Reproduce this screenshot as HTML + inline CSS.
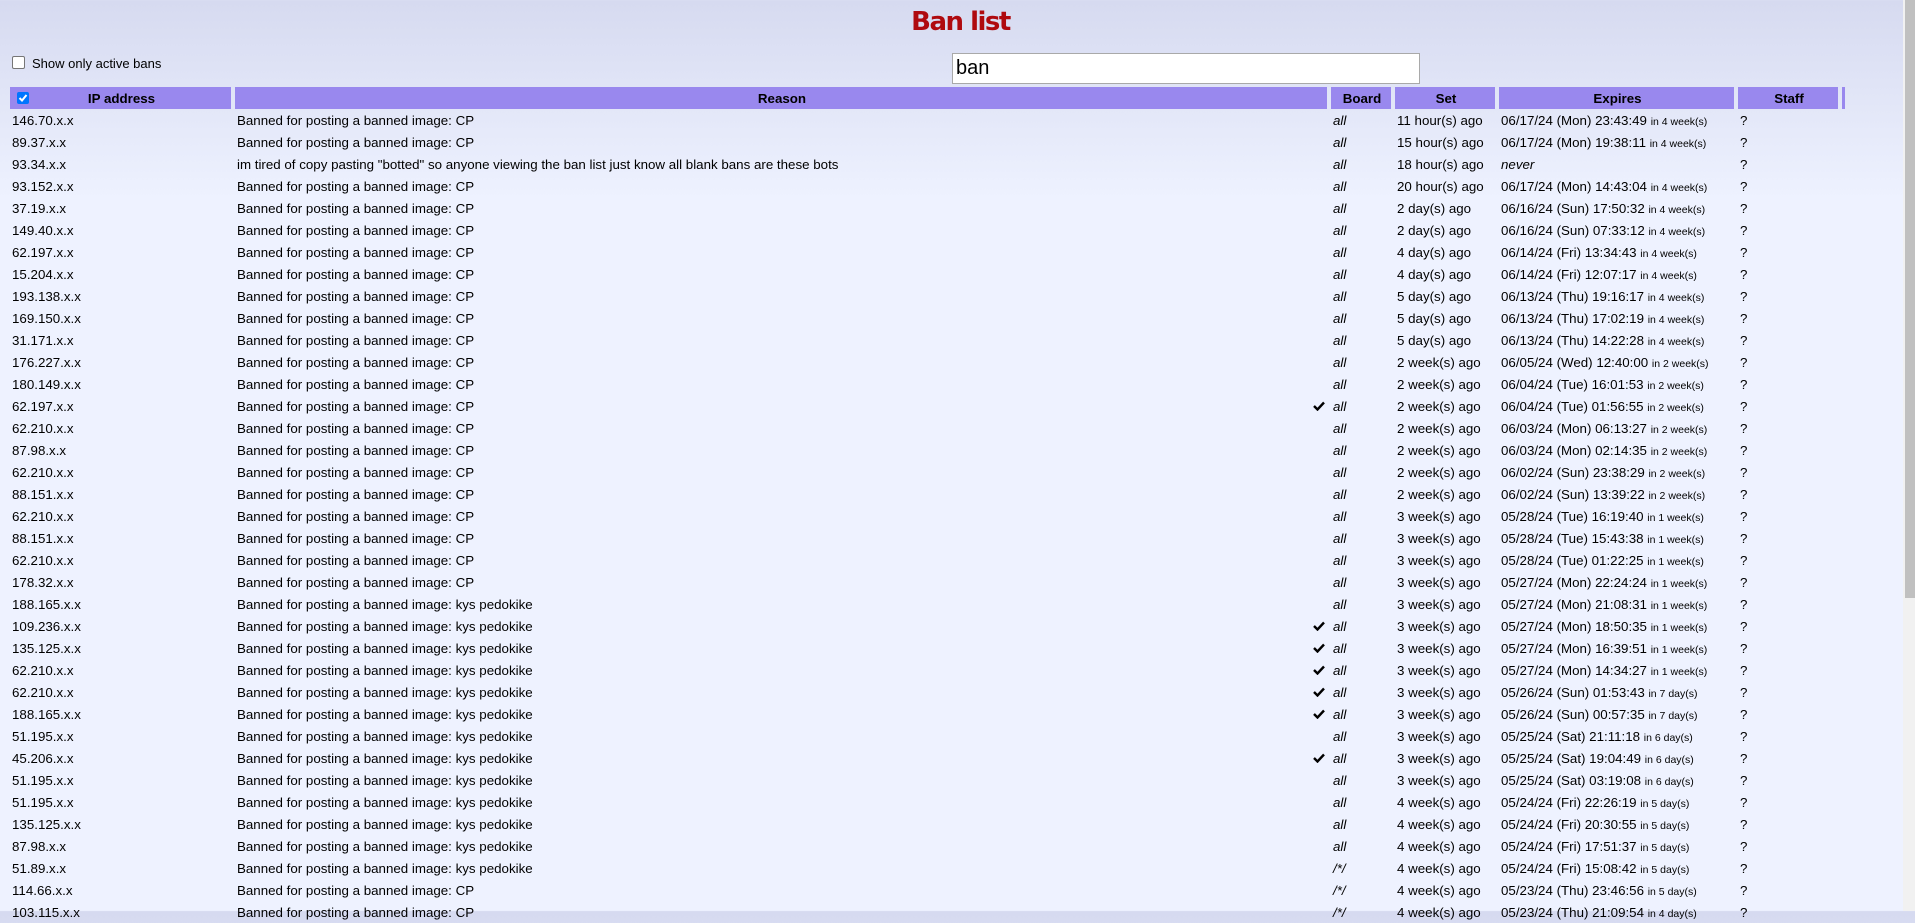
<!DOCTYPE html>
<html><head><meta charset="utf-8"><style>
html,body{margin:0;padding:0;}
body{width:1915px;height:911px;overflow:hidden;position:relative;font-family:"Liberation Sans",Arial,sans-serif;font-size:13.33px;color:#000;
background:linear-gradient(#d6daf0 0px,#eef2ff 200px,#eef2ff 911px);}
h1{position:absolute;left:0;width:1921px;top:7px;margin:0;text-align:center;font-family:"DejaVu Sans","Liberation Sans",sans-serif;font-weight:bold;font-size:26px;color:#af0a0f;letter-spacing:-1.5px;}
.chk{position:absolute;left:12px;top:56px;width:11px;height:11px;border:1px solid #767676;border-radius:2px;background:#fff;}
.lbl{position:absolute;left:32px;top:56px;font-size:13px;}
.inp{position:absolute;left:952px;top:53px;width:468px;height:31px;background:#fff;border:1px solid #a9a9a9;font-size:20px;line-height:29px;padding-left:3px;box-sizing:border-box;}
table{position:absolute;left:6px;top:87px;border-collapse:separate;border-spacing:4px 0;table-layout:fixed;}
td,th{padding:0 0 0 2px;height:22px;white-space:nowrap;overflow:hidden;}
th{background:#9988ee;font-weight:bold;font-size:13.33px;text-align:center;position:relative;}
th .cb{position:absolute;left:7px;top:5px;width:12px;height:12px;background:#0075ff;border-radius:2px;}
td.b{font-style:italic;}
td.r{position:relative;}
td.r svg{position:absolute;right:2px;top:6px;}
small{font-size:10.5px;}
.sb{position:absolute;right:0;top:0;width:12px;height:911px;background:#f1f1f1;}
.th{position:absolute;right:0;top:0;width:10px;height:598px;background:#c0c0c0;}
</style></head><body>
<h1>Ban list</h1>
<div class="chk"></div><div class="lbl">Show only active bans</div>
<div class="inp">ban</div>
<svg width="0" height="0" style="position:absolute"><defs><path id="ck" d="M1 5 L4.5 8.5 L11 1.5" fill="none" stroke="#000" stroke-width="2.4"/></defs></svg>
<table>
<colgroup><col style="width:221px"><col style="width:1092px"><col style="width:60px"><col style="width:100px"><col style="width:235px"><col style="width:100px"><col style="width:3px"></colgroup>
<tr><th><span class="cb"><svg width="12" height="12" viewBox="0 0 12 12"><path d="M2.5 6 L5 8.5 L9.5 3" fill="none" stroke="#fff" stroke-width="2"/></svg></span>IP address</th><th>Reason</th><th>Board</th><th>Set</th><th>Expires</th><th>Staff</th><th></th></tr>
<tbody>
<tr><td>146.70.x.x</td><td class="r">Banned for posting a banned image: CP</td><td class="b">all</td><td>11 hour(s) ago</td><td>06/17/24 (Mon) 23:43:49 <small>in 4 week(s)</small></td><td>?</td><td></td></tr>
<tr><td>89.37.x.x</td><td class="r">Banned for posting a banned image: CP</td><td class="b">all</td><td>15 hour(s) ago</td><td>06/17/24 (Mon) 19:38:11 <small>in 4 week(s)</small></td><td>?</td><td></td></tr>
<tr><td>93.34.x.x</td><td class="r">im tired of copy pasting "botted" so anyone viewing the ban list just know all blank bans are these bots</td><td class="b">all</td><td>18 hour(s) ago</td><td><i>never</i></td><td>?</td><td></td></tr>
<tr><td>93.152.x.x</td><td class="r">Banned for posting a banned image: CP</td><td class="b">all</td><td>20 hour(s) ago</td><td>06/17/24 (Mon) 14:43:04 <small>in 4 week(s)</small></td><td>?</td><td></td></tr>
<tr><td>37.19.x.x</td><td class="r">Banned for posting a banned image: CP</td><td class="b">all</td><td>2 day(s) ago</td><td>06/16/24 (Sun) 17:50:32 <small>in 4 week(s)</small></td><td>?</td><td></td></tr>
<tr><td>149.40.x.x</td><td class="r">Banned for posting a banned image: CP</td><td class="b">all</td><td>2 day(s) ago</td><td>06/16/24 (Sun) 07:33:12 <small>in 4 week(s)</small></td><td>?</td><td></td></tr>
<tr><td>62.197.x.x</td><td class="r">Banned for posting a banned image: CP</td><td class="b">all</td><td>4 day(s) ago</td><td>06/14/24 (Fri) 13:34:43 <small>in 4 week(s)</small></td><td>?</td><td></td></tr>
<tr><td>15.204.x.x</td><td class="r">Banned for posting a banned image: CP</td><td class="b">all</td><td>4 day(s) ago</td><td>06/14/24 (Fri) 12:07:17 <small>in 4 week(s)</small></td><td>?</td><td></td></tr>
<tr><td>193.138.x.x</td><td class="r">Banned for posting a banned image: CP</td><td class="b">all</td><td>5 day(s) ago</td><td>06/13/24 (Thu) 19:16:17 <small>in 4 week(s)</small></td><td>?</td><td></td></tr>
<tr><td>169.150.x.x</td><td class="r">Banned for posting a banned image: CP</td><td class="b">all</td><td>5 day(s) ago</td><td>06/13/24 (Thu) 17:02:19 <small>in 4 week(s)</small></td><td>?</td><td></td></tr>
<tr><td>31.171.x.x</td><td class="r">Banned for posting a banned image: CP</td><td class="b">all</td><td>5 day(s) ago</td><td>06/13/24 (Thu) 14:22:28 <small>in 4 week(s)</small></td><td>?</td><td></td></tr>
<tr><td>176.227.x.x</td><td class="r">Banned for posting a banned image: CP</td><td class="b">all</td><td>2 week(s) ago</td><td>06/05/24 (Wed) 12:40:00 <small>in 2 week(s)</small></td><td>?</td><td></td></tr>
<tr><td>180.149.x.x</td><td class="r">Banned for posting a banned image: CP</td><td class="b">all</td><td>2 week(s) ago</td><td>06/04/24 (Tue) 16:01:53 <small>in 2 week(s)</small></td><td>?</td><td></td></tr>
<tr><td>62.197.x.x</td><td class="r">Banned for posting a banned image: CP<svg width="12" height="10"><use href="#ck"/></svg></td><td class="b">all</td><td>2 week(s) ago</td><td>06/04/24 (Tue) 01:56:55 <small>in 2 week(s)</small></td><td>?</td><td></td></tr>
<tr><td>62.210.x.x</td><td class="r">Banned for posting a banned image: CP</td><td class="b">all</td><td>2 week(s) ago</td><td>06/03/24 (Mon) 06:13:27 <small>in 2 week(s)</small></td><td>?</td><td></td></tr>
<tr><td>87.98.x.x</td><td class="r">Banned for posting a banned image: CP</td><td class="b">all</td><td>2 week(s) ago</td><td>06/03/24 (Mon) 02:14:35 <small>in 2 week(s)</small></td><td>?</td><td></td></tr>
<tr><td>62.210.x.x</td><td class="r">Banned for posting a banned image: CP</td><td class="b">all</td><td>2 week(s) ago</td><td>06/02/24 (Sun) 23:38:29 <small>in 2 week(s)</small></td><td>?</td><td></td></tr>
<tr><td>88.151.x.x</td><td class="r">Banned for posting a banned image: CP</td><td class="b">all</td><td>2 week(s) ago</td><td>06/02/24 (Sun) 13:39:22 <small>in 2 week(s)</small></td><td>?</td><td></td></tr>
<tr><td>62.210.x.x</td><td class="r">Banned for posting a banned image: CP</td><td class="b">all</td><td>3 week(s) ago</td><td>05/28/24 (Tue) 16:19:40 <small>in 1 week(s)</small></td><td>?</td><td></td></tr>
<tr><td>88.151.x.x</td><td class="r">Banned for posting a banned image: CP</td><td class="b">all</td><td>3 week(s) ago</td><td>05/28/24 (Tue) 15:43:38 <small>in 1 week(s)</small></td><td>?</td><td></td></tr>
<tr><td>62.210.x.x</td><td class="r">Banned for posting a banned image: CP</td><td class="b">all</td><td>3 week(s) ago</td><td>05/28/24 (Tue) 01:22:25 <small>in 1 week(s)</small></td><td>?</td><td></td></tr>
<tr><td>178.32.x.x</td><td class="r">Banned for posting a banned image: CP</td><td class="b">all</td><td>3 week(s) ago</td><td>05/27/24 (Mon) 22:24:24 <small>in 1 week(s)</small></td><td>?</td><td></td></tr>
<tr><td>188.165.x.x</td><td class="r">Banned for posting a banned image: kys pedokike</td><td class="b">all</td><td>3 week(s) ago</td><td>05/27/24 (Mon) 21:08:31 <small>in 1 week(s)</small></td><td>?</td><td></td></tr>
<tr><td>109.236.x.x</td><td class="r">Banned for posting a banned image: kys pedokike<svg width="12" height="10"><use href="#ck"/></svg></td><td class="b">all</td><td>3 week(s) ago</td><td>05/27/24 (Mon) 18:50:35 <small>in 1 week(s)</small></td><td>?</td><td></td></tr>
<tr><td>135.125.x.x</td><td class="r">Banned for posting a banned image: kys pedokike<svg width="12" height="10"><use href="#ck"/></svg></td><td class="b">all</td><td>3 week(s) ago</td><td>05/27/24 (Mon) 16:39:51 <small>in 1 week(s)</small></td><td>?</td><td></td></tr>
<tr><td>62.210.x.x</td><td class="r">Banned for posting a banned image: kys pedokike<svg width="12" height="10"><use href="#ck"/></svg></td><td class="b">all</td><td>3 week(s) ago</td><td>05/27/24 (Mon) 14:34:27 <small>in 1 week(s)</small></td><td>?</td><td></td></tr>
<tr><td>62.210.x.x</td><td class="r">Banned for posting a banned image: kys pedokike<svg width="12" height="10"><use href="#ck"/></svg></td><td class="b">all</td><td>3 week(s) ago</td><td>05/26/24 (Sun) 01:53:43 <small>in 7 day(s)</small></td><td>?</td><td></td></tr>
<tr><td>188.165.x.x</td><td class="r">Banned for posting a banned image: kys pedokike<svg width="12" height="10"><use href="#ck"/></svg></td><td class="b">all</td><td>3 week(s) ago</td><td>05/26/24 (Sun) 00:57:35 <small>in 7 day(s)</small></td><td>?</td><td></td></tr>
<tr><td>51.195.x.x</td><td class="r">Banned for posting a banned image: kys pedokike</td><td class="b">all</td><td>3 week(s) ago</td><td>05/25/24 (Sat) 21:11:18 <small>in 6 day(s)</small></td><td>?</td><td></td></tr>
<tr><td>45.206.x.x</td><td class="r">Banned for posting a banned image: kys pedokike<svg width="12" height="10"><use href="#ck"/></svg></td><td class="b">all</td><td>3 week(s) ago</td><td>05/25/24 (Sat) 19:04:49 <small>in 6 day(s)</small></td><td>?</td><td></td></tr>
<tr><td>51.195.x.x</td><td class="r">Banned for posting a banned image: kys pedokike</td><td class="b">all</td><td>3 week(s) ago</td><td>05/25/24 (Sat) 03:19:08 <small>in 6 day(s)</small></td><td>?</td><td></td></tr>
<tr><td>51.195.x.x</td><td class="r">Banned for posting a banned image: kys pedokike</td><td class="b">all</td><td>4 week(s) ago</td><td>05/24/24 (Fri) 22:26:19 <small>in 5 day(s)</small></td><td>?</td><td></td></tr>
<tr><td>135.125.x.x</td><td class="r">Banned for posting a banned image: kys pedokike</td><td class="b">all</td><td>4 week(s) ago</td><td>05/24/24 (Fri) 20:30:55 <small>in 5 day(s)</small></td><td>?</td><td></td></tr>
<tr><td>87.98.x.x</td><td class="r">Banned for posting a banned image: kys pedokike</td><td class="b">all</td><td>4 week(s) ago</td><td>05/24/24 (Fri) 17:51:37 <small>in 5 day(s)</small></td><td>?</td><td></td></tr>
<tr><td>51.89.x.x</td><td class="r">Banned for posting a banned image: kys pedokike</td><td class="b">/*/</td><td>4 week(s) ago</td><td>05/24/24 (Fri) 15:08:42 <small>in 5 day(s)</small></td><td>?</td><td></td></tr>
<tr><td>114.66.x.x</td><td class="r">Banned for posting a banned image: CP</td><td class="b">/*/</td><td>4 week(s) ago</td><td>05/23/24 (Thu) 23:46:56 <small>in 5 day(s)</small></td><td>?</td><td></td></tr>
<tr><td>103.115.x.x</td><td class="r">Banned for posting a banned image: CP</td><td class="b">/*/</td><td>4 week(s) ago</td><td>05/23/24 (Thu) 21:09:54 <small>in 4 day(s)</small></td><td>?</td><td></td></tr>
</tbody></table>
<div class="sb"><div class="th"></div></div>
</body></html>
